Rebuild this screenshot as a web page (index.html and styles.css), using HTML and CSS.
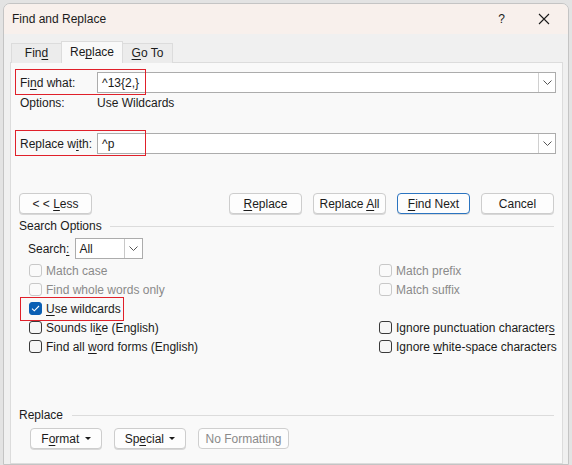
FILE: index.html
```html
<!DOCTYPE html>
<html>
<head>
<meta charset="utf-8">
<link rel="stylesheet" href="styles.css">
</head>
<body>
<div class="window">
  <div class="titlebar">
    <span class="title">Find and Replace</span>
    <span class="tb-help">?</span>
    <svg class="tb-close" width="12" height="12" viewBox="0 0 12 12"><path d="M1 1 L11 11 M11 1 L1 11" stroke="#1b1b1b" stroke-width="1.1" fill="none"/></svg>
  </div>
  <div class="body">
    <div class="tabs">
      <div class="tab">Fin<u>d</u></div>
      <div class="tab active">Re<u>p</u>lace</div>
      <div class="tab"><u>G</u>o To</div>
    </div>
    <div class="panel">
      <div class="field-row">
        <div class="annot annot-find"></div>
        <label class="flabel">Fi<u>n</u>d what:</label>
        <div class="combo">
          <span class="combo-text">^13{2,}</span>
          <span class="combo-btn"><svg width="9" height="5" viewBox="0 0 9 5"><path d="M0.5 0.5 L4.5 4.5 L8.5 0.5" stroke="#555" fill="none"/></svg></span>
        </div>
      </div>
      <div class="opt-row">
        <span class="flabel">Options:</span>
        <span>Use Wildcards</span>
      </div>
      <div class="field-row replace-row">
        <div class="annot annot-find"></div>
        <label class="flabel">Replace w<u>i</u>th:</label>
        <div class="combo">
          <span class="combo-text">^p</span>
          <span class="combo-btn"><svg width="9" height="5" viewBox="0 0 9 5"><path d="M0.5 0.5 L4.5 4.5 L8.5 0.5" stroke="#555" fill="none"/></svg></span>
        </div>
      </div>
      <div class="btn-row">
        <button class="btn less">&lt; &lt; <u>L</u>ess</button>
        <div class="btn-group">
          <button class="btn"><u>R</u>eplace</button>
          <button class="btn">Replace <u>A</u>ll</button>
          <button class="btn primary"><u>F</u>ind Next</button>
          <button class="btn">Cancel</button>
        </div>
      </div>
      <div class="section-head"><span>Search Options</span><span class="rule"></span></div>
      <div class="search-row">
        <span>Search<u>:</u></span>
        <div class="select">
          <span class="select-text">All</span>
          <span class="select-btn"><svg width="9" height="5" viewBox="0 0 9 5"><path d="M0.5 0.5 L4.5 4.5 L8.5 0.5" stroke="#555" fill="none"/></svg></span>
        </div>
      </div>
      <div class="checks">
        <div class="col">
          <div class="chk disabled"><span class="box"></span><span>Match case</span></div>
          <div class="chk disabled"><span class="box"></span><span>Find whole words only</span></div>
          <div class="chk checked-row">
            <div class="annot annot-wild"></div>
            <span class="box checked"><svg width="9" height="7" viewBox="0 0 9 7"><path d="M1 3.6 L3.3 5.8 L8 1" stroke="#fff" stroke-width="1.1" fill="none"/></svg></span><span><u>U</u>se wildcards</span></div>
          <div class="chk"><span class="box"></span><span>Sounds li<u>k</u>e (English)</span></div>
          <div class="chk"><span class="box"></span><span>Find all <u>w</u>ord forms (English)</span></div>
        </div>
        <div class="col right">
          <div class="chk disabled"><span class="box"></span><span>Match prefix</span></div>
          <div class="chk disabled"><span class="box"></span><span>Match suffix</span></div>
          <div class="chk empty"></div>
          <div class="chk"><span class="box"></span><span>Ignore punctuation character<u>s</u></span></div>
          <div class="chk"><span class="box"></span><span>Ignore <u>w</u>hite-space characters</span></div>
        </div>
      </div>
      <div class="section-head replace-head"><span>Replace</span><span class="rule"></span></div>
      <div class="bottom-btns">
        <button class="btn small">F<u>o</u>rmat <span class="caret"></span></button>
        <button class="btn small">Sp<u>e</u>cial <span class="caret"></span></button>
        <button class="btn small wide disabled">No Formatting</button>
      </div>
    </div>
  </div>
</div>
</body>
</html>
```

FILE: styles.css
```css
* { box-sizing: border-box; }
html, body { margin: 0; padding: 0; }
body {
  width: 572px;
  height: 465px;
  overflow: hidden;
  background: #e3e3e3;
  font-family: "Liberation Sans", Arial, sans-serif;
  font-size: 12px;
  color: #1b1b1b;
  padding: 3px 3px 0 3px;
}
u { text-decoration: underline; text-underline-offset: 2px; }

.window {
  width: 566px;
  height: 462px;
  border: 1px solid #c4c4c4;
  border-radius: 7px 7px 0 0;
  background: #f0f0f0;
  overflow: hidden;
  display: flex;
  flex-direction: column;
}
.titlebar {
  height: 30px;
  flex: none;
  background: #f8f0ec;
  display: flex;
  align-items: center;
  padding: 0 18px 0 8px;
  font-size: 12px;
}
.title { flex: 1; }
.tb-help { margin-right: 33px; font-size: 12px; }
.tb-close { display: block; }

.body {
  flex: 1;
  padding: 7px 5px 0 6px;
  display: flex;
  flex-direction: column;
}
.tabs {
  display: flex;
  align-items: flex-end;
  height: 22px;
  padding-left: 1px;
  position: relative;
  z-index: 1;
}
.tab {
  height: 20px;
  text-align: center;
  border: 1px solid #dcdcdc;
  border-bottom: none;
  background: #ececec;
  line-height: 19px;
  width: 51px;
}
.tab + .tab { margin-left: -1px; }
.tab.active {
  height: 22px;
  background: #f9f9f9;
  width: 62px;
  line-height: 20px;
  padding-bottom: 3px;
}

.panel {
  flex: 1;
  border: 1px solid #dcdcdc;
  background: #f9f9f9;
  margin-top: -1px;
  padding: 9px 6px 0 9px;
  display: flex;
  flex-direction: column;
}

.field-row {
  display: flex;
  align-items: center;
  height: 21px;
  position: relative;
}
.flabel { width: 77px; flex: none; }
.annot {
  position: absolute;
  border: 1px solid #e0202a;
  pointer-events: none;
}
.annot-find { left: -5px; top: -3px; width: 131px; height: 26px; }
.combo {
  flex: 1;
  height: 21px;
  border: 1px solid #acacac;
  background: #fff;
  display: flex;
  align-items: center;
  padding-left: 4px;
}
.combo-text { flex: 1; }
.combo-btn {
  width: 17px;
  height: 19px;
  border-left: 1px solid #d0d0d0;
  display: flex;
  align-items: center;
  justify-content: center;
}
.opt-row {
  display: flex;
  align-items: center;
  height: 14px;
  margin-top: 3px;
}
.replace-row { margin-top: 23px; }

.btn-row {
  display: flex;
  justify-content: space-between;
  margin-top: 39px;
  padding-right: 2px;
  margin-left: -1px;
}
.btn-group { display: flex; gap: 11px; }
.btn {
  font-family: inherit;
  font-size: 12px;
  color: #1b1b1b;
  width: 73px;
  height: 21px;
  padding: 0;
  border: 1px solid #cdcdcd;
  border-radius: 4px;
  background: #fdfdfd;
  box-shadow: 0 1px 0 #d8d8d8;
  white-space: nowrap;
}
.btn.primary { border-color: #2b74c0; }

.section-head {
  display: flex;
  align-items: center;
  margin-top: 5px;
  height: 14px;
  gap: 8px;
  margin-left: -1px;
}
.rule { flex: 1; height: 1px; background: #dcdcdc; margin-right: 2px; }

.search-row {
  display: flex;
  align-items: center;
  margin-top: 5px;
  padding-left: 8px;
  gap: 6px;
}
.select {
  width: 68px;
  height: 21px;
  border: 1px solid #acacac;
  background: #fff;
  display: flex;
  align-items: center;
  padding-left: 3px;
}
.select-text { flex: 1; }
.select-btn {
  width: 18px;
  height: 19px;
  border-left: 1px solid #c8c8c8;
  display: flex;
  align-items: center;
  justify-content: center;
}

.checks {
  display: flex;
  margin-top: 2px;
  padding-left: 9px;
}
.col { width: 350px; flex: none; }
.col.right { width: auto; flex: 1; min-width: 0; }
.chk {
  height: 19px;
  display: flex;
  align-items: center;
  position: relative;
  white-space: nowrap;
}
.box {
  width: 13px;
  height: 13px;
  border: 1px solid #3a3a3a;
  border-radius: 3px;
  background: #f6f6f6;
  margin-right: 4px;
  flex: none;
  display: flex;
  align-items: center;
  justify-content: center;
}
.box.checked { background: #0a5fb4; border-color: #0a5fb4; }
.chk.disabled { color: #8a8a8a; }
.chk.disabled .box { border-color: #c8c8c8; background: #fafafa; }
.annot-wild { left: -9px; top: -2px; width: 104px; height: 24px; }

.replace-head { margin-top: 52px; gap: 9px; }

.bottom-btns {
  display: flex;
  gap: 12px;
  margin-top: 6px;
  padding-left: 10px;
}
.btn.small { width: 72px; height: 21px; }
.btn.wide { width: 91px; }
.btn.disabled { color: #8a8a8a; box-shadow: none; border-color: #cfcfcf; }
.caret {
  display: inline-block;
  width: 0; height: 0;
  border-left: 3px solid transparent;
  border-right: 3px solid transparent;
  border-top: 3px solid #1b1b1b;
  vertical-align: middle;
  margin-left: 2px;
  margin-bottom: 2px;
}
```
